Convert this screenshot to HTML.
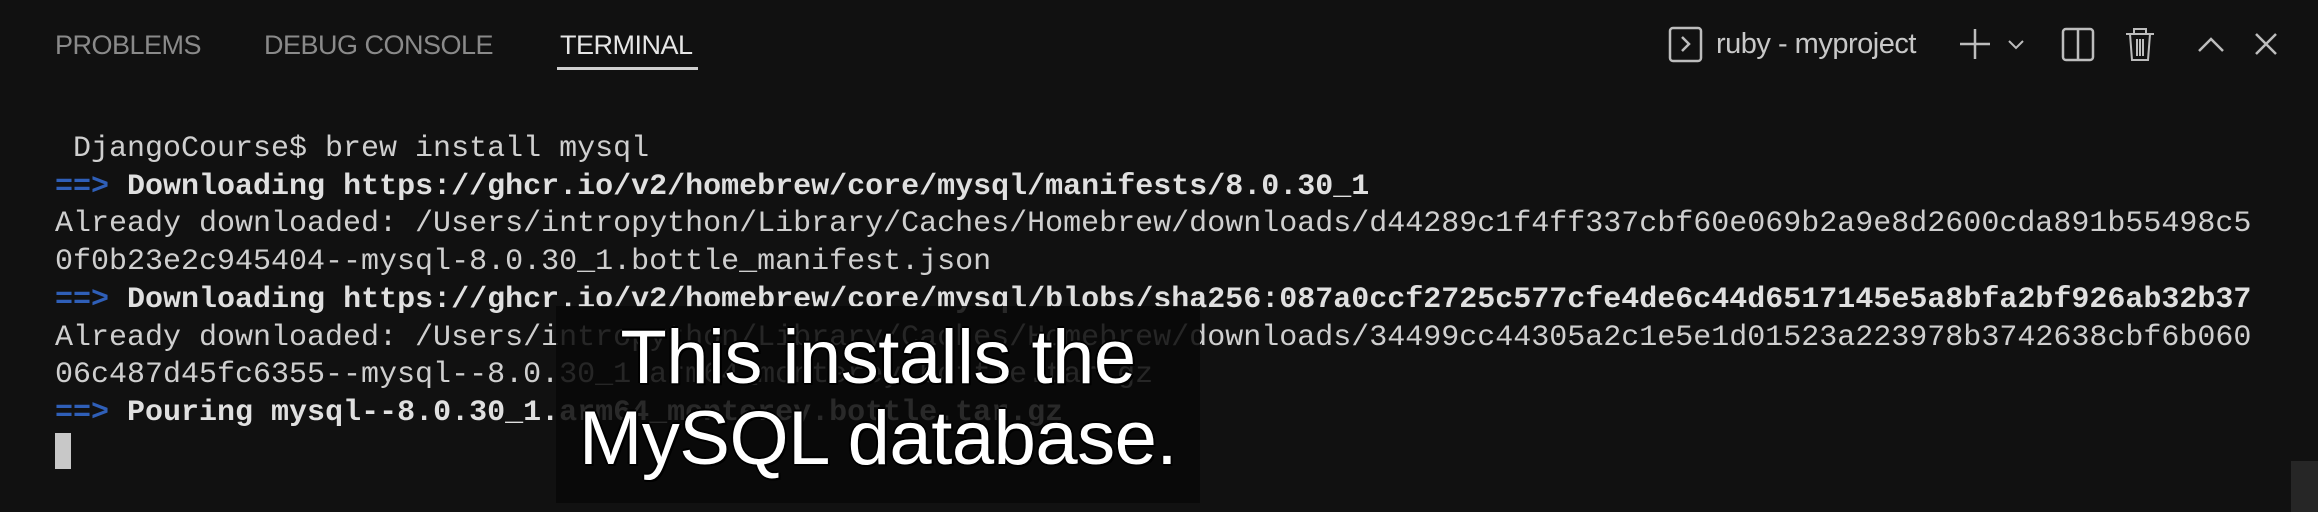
<!DOCTYPE html>
<html><head><meta charset="utf-8"><style>
html,body{margin:0;padding:0}
body{width:2318px;height:512px;background:#111111;position:relative;overflow:hidden;font-family:"Liberation Sans",sans-serif}
.tab{position:absolute;top:30px;font-size:27px;color:#8a8a8a;letter-spacing:-0.5px}
.term{position:absolute;left:55px;top:131px;font-family:"Liberation Mono",monospace;font-size:30px;letter-spacing:0;line-height:37.7px;color:#cfcfcf;white-space:pre}
.b{font-weight:bold;color:#e0e0e0}
.ar{color:#2f5fb8;font-weight:bold}
.ic{position:absolute}
</style></head><body>
<div class="tab" style="left:55px">PROBLEMS</div>
<div class="tab" style="left:264px">DEBUG CONSOLE</div>
<div class="tab" style="left:560px;color:#e6e6e6">TERMINAL</div>
<div style="position:absolute;left:557px;top:67px;width:141px;height:3px;background:#cfcfcf"></div>

<svg class="ic" style="left:1660px;top:20px" width="658" height="50" viewBox="1660 20 658 50" fill="none" stroke="#bdbdbd" stroke-width="2.5">
<rect x="1670" y="28" width="31" height="33" rx="3"/>
<path d="M1682 37 L1689 44 L1682 51"/>
<path d="M1975 29 V59 M1960 44 H1990"/>
<path d="M2009 41 L2016 48 L2023 41" stroke-width="2"/>
<rect x="2063" y="29" width="30" height="31" rx="3"/>
<path d="M2078 29 V60"/>
<path d="M2126 34 H2154 M2134 34 V29 H2146 V34 M2130 34 L2132 60 H2148 L2150 34 M2137 39 V56 M2140 39 V56 M2143 39 V56" stroke-width="2"/>
<path d="M2199 51 L2211 39 L2223 51"/>
<path d="M2256 34 L2276 54 M2276 34 L2256 54"/>
</svg>
<div style="position:absolute;left:1716px;top:28px;font-size:29px;color:#c8c8c8;letter-spacing:-0.5px">ruby - myproject</div>

<div class="term"> DjangoCourse$ brew install mysql
<span class="ar">==&gt;</span> <span class="b">Downloading https://ghcr.io/v2/homebrew/core/mysql/manifests/8.0.30_1</span>
Already downloaded: /Users/intropython/Library/Caches/Homebrew/downloads/d44289c1f4ff337cbf60e069b2a9e8d2600cda891b55498c5
0f0b23e2c945404--mysql-8.0.30_1.bottle_manifest.json
<span class="ar">==&gt;</span> <span class="b">Downloading https://ghcr.io/v2/homebrew/core/mysql/blobs/sha256:087a0ccf2725c577cfe4de6c44d6517145e5a8bfa2bf926ab32b37</span>
Already downloaded: /Users/intropython/Library/Caches/Homebrew/downloads/34499cc44305a2c1e5e1d01523a223978b3742638cbf6b060
06c487d45fc6355--mysql--8.0.30_1.arm64_monterey.bottle.tar.gz
<span class="ar">==&gt;</span> <span class="b">Pouring mysql--8.0.30_1.arm64_monterey.bottle.tar.gz</span>
</div>
<div style="position:absolute;left:55px;top:433px;width:16px;height:36px;background:#c8c8c8"></div>

<div style="position:absolute;left:556px;top:306px;width:644px;height:197px;background:rgba(8,8,8,0.85)"></div>
<div style="position:absolute;left:546px;top:317px;width:664px;text-align:center;color:#fff;font-size:76px;line-height:81px;letter-spacing:-0.5px;text-shadow:-2px 0 #000,2px 0 #000,0 2px #000,0 -2px #000,2px 2px #000">This installs the<br>MySQL database.</div>

<div style="position:absolute;left:2291px;top:461px;width:27px;height:51px;background:#262626"></div>
</body></html>
